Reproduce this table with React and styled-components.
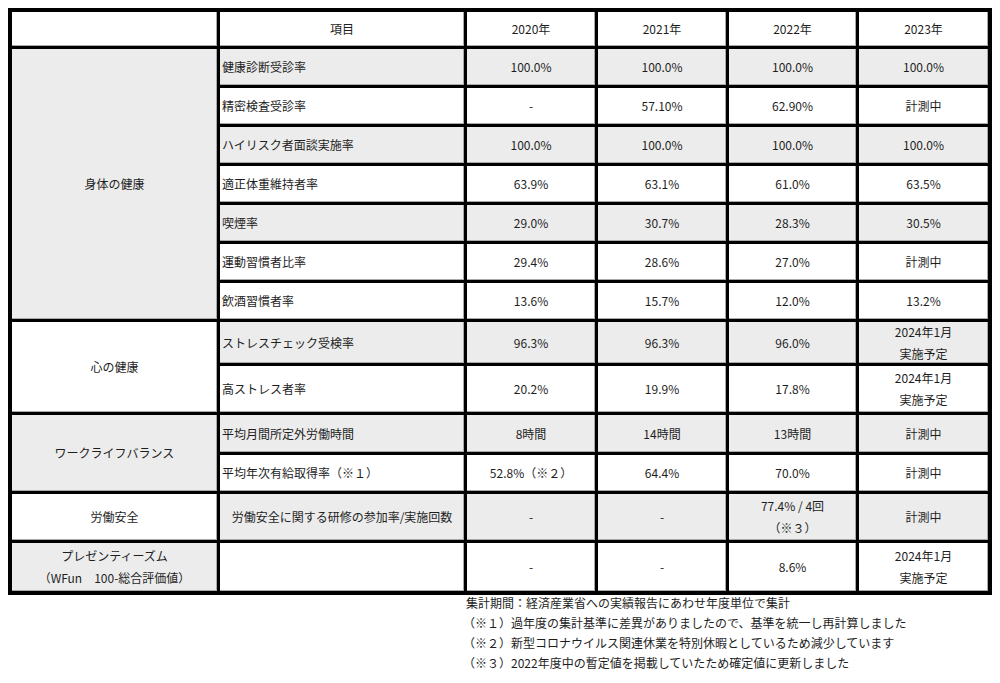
import React from "react";
import styled, { createGlobalStyle } from "styled-components";

const GlobalStyle = createGlobalStyle`
  body {
    margin: 8px;
    background: #ffffff;
    font-family: "Noto Sans CJK JP", "Noto Sans", sans-serif;
    color: #1e1e1e;
  }
`;

const years = ["2020年", "2021年", "2022年", "2023年"];

const groups = [
  {
    label: ["身体の健康"],
    gray: true,
    rows: [
      { name: "健康診断受診率", gray: true, values: ["100.0%", "100.0%", "100.0%", "100.0%"] },
      { name: "精密検査受診率", values: ["-", "57.10%", "62.90%", "計測中"] },
      { name: "ハイリスク者面談実施率", gray: true, values: ["100.0%", "100.0%", "100.0%", "100.0%"] },
      { name: "適正体重維持者率", values: ["63.9%", "63.1%", "61.0%", "63.5%"] },
      { name: "喫煙率", gray: true, values: ["29.0%", "30.7%", "28.3%", "30.5%"] },
      { name: "運動習慣者比率", values: ["29.4%", "28.6%", "27.0%", "計測中"] },
      { name: "飲酒習慣者率", values: ["13.6%", "15.7%", "12.0%", "13.2%"] },
    ],
  },
  {
    label: ["心の健康"],
    rows: [
      { name: "ストレスチェック受検率", gray: true, values: ["96.3%", "96.3%", "96.0%", ["2024年1月", "実施予定"]] },
      { name: "高ストレス者率", values: ["20.2%", "19.9%", "17.8%", ["2024年1月", "実施予定"]] },
    ],
  },
  {
    label: ["ワークライフバランス"],
    gray: true,
    rows: [
      { name: "平均月間所定外労働時間", gray: true, values: ["8時間", "14時間", "13時間", "計測中"] },
      { name: "平均年次有給取得率（※１）", values: ["52.8%（※２）", "64.4%", "70.0%", "計測中"] },
    ],
  },
  {
    label: ["労働安全"],
    rows: [
      {
        name: "労働安全に関する研修の参加率/実施回数",
        centered: true,
        gray: true,
        values: ["-", "-", ["77.4% / 4回", "（※３）"], "計測中"],
      },
    ],
  },
  {
    label: ["プレゼンティーズム", "（WFun　100-総合評価値）"],
    gray: true,
    rows: [{ name: "", values: ["-", "-", "8.6%", ["2024年1月", "実施予定"]] }],
  },
];

const rowHeights = [34, 36, 36, 36, 36, 36, 36, 36, 41, 46, 37, 36, 46, 48];

const notes = [
  "集計期間：経済産業省への実績報告にあわせ年度単位で集計",
  "（※１）過年度の集計基準に差異がありましたので、基準を統一し再計算しました",
  "（※２）新型コロナウイルス関連休業を特別休暇としているため減少しています",
  "（※３）2022年度中の暫定値を掲載していたため確定値に更新しました",
];

const Table = styled.div`
  display: grid;
  grid-template-columns: 205px 244px 128px 128px 127px 129px;
  grid-template-rows: ${rowHeights.map((h) => `${h}px`).join(" ")};
  gap: 3px;
  padding: 4px;
  width: max-content;
  background: #000000;
  font-size: 12px;
`;

const Cell = styled.div`
  display: flex;
  flex-direction: column;
  justify-content: center;
  align-items: ${(p) => (p.$left ? "flex-start" : "center")};
  padding-left: ${(p) => (p.$left ? "2px" : "0")};
  grid-row: ${(p) => (p.$span ? `span ${p.$span}` : "auto")};
  background: ${(p) => (p.$gray ? "#ececec" : "#ffffff")};
  box-shadow: inset -1px -1px 0 #a9a9a9;
  line-height: 22px;
  text-align: center;
  white-space: nowrap;
`;

const Notes = styled.div`
  margin-top: -2px;
  padding-left: 458px;
  font-size: 12px;
  line-height: 20px;
  color: #1e1e1e;
`;

const Note = styled.div`
  margin-left: ${(p) => (p.$paren ? "-3px" : "0")};
`;

const Lines = ({ value }) =>
  Array.isArray(value) ? value.map((line) => <span key={line}>{line}</span>) : value;

export default function App() {
  return (
    <>
      <GlobalStyle />
      <Table>
        <Cell />
        <Cell>項目</Cell>
        {years.map((y) => (
          <Cell key={y}>{y}</Cell>
        ))}
        {groups.map((group) =>
          group.rows.map((row, i) => (
            <React.Fragment key={group.label[0] + i}>
              {i === 0 && (
                <Cell $gray={group.gray} $span={group.rows.length}>
                  <Lines value={group.label} />
                </Cell>
              )}
              <Cell $gray={row.gray} $left={!row.centered}>
                {row.name}
              </Cell>
              {row.values.map((v, j) => (
                <Cell key={j} $gray={row.gray}>
                  <Lines value={v} />
                </Cell>
              ))}
            </React.Fragment>
          ))
        )}
      </Table>
      <Notes>
        {notes.map((n) => (
          <Note key={n} $paren={n.startsWith("（")}>
            {n}
          </Note>
        ))}
      </Notes>
    </>
  );
}
